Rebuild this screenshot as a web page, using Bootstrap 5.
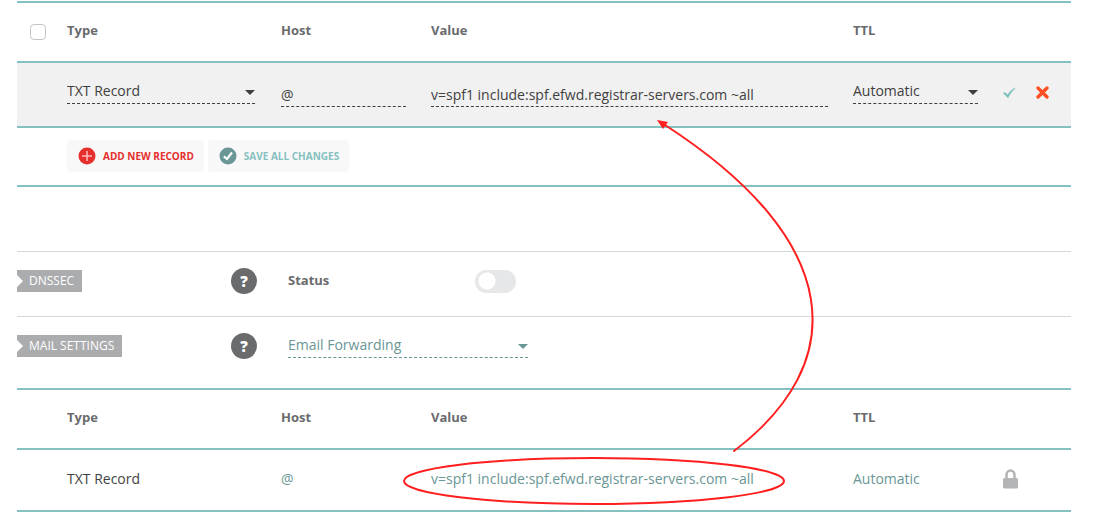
<!DOCTYPE html>
<html lang="en">
<head>
<meta charset="utf-8">
<meta name="viewport" content="width=device-width, initial-scale=1">
<title>Advanced DNS</title>
<link href="https://cdn.jsdelivr.net/npm/bootstrap@5.3.0/dist/css/bootstrap.min.css" rel="stylesheet">
<style>
  :root { --teal: #85c1c1; --teal-dark: #6a9696; --ink: #3f3f3f; --head: #6a6b6d; }
  body { font-family: "Open Sans", "Noto Sans", sans-serif; font-size: 14px; line-height: 20px; color: var(--ink); background: #fff; }
  .dns-page { padding: 1px 32px 4px 17px; }
  .records { table-layout: fixed; border-collapse: separate; border-spacing: 0; border-bottom: 2px solid var(--teal); }
  .records th, .records td { border-top: 2px solid var(--teal); padding: 0 25px 0 0; vertical-align: top; }
  .records th { height: 60px; padding-top: 17px; color: var(--head); font-weight: 700; font-size: 13px; }
  .col-check { width: 50px; } .col-type { width: 214px; } .col-host, .col-ttl { width: 150px; } .col-act { width: 68px; }
  .records td { height: 62px; padding-top: 19px; }
  .records .editing td { height: 65px; padding-top: 16px; background: #f1f1f1; }
  .records .cell-type-edit { padding-right: 26px; }
  .records td.cell-act { padding-right: 0; }
  .form-check-input.pick { width: 16px; height: 16px; margin: 4px 0 0 13px; border: 1px solid #c4c4c4; border-radius: 4px; display: block; }
  .line-field { display: block; width: 100%; border: 0; border-bottom: 1px dashed currentColor; border-radius: 0; background: transparent; color: inherit; padding: 0; height: 25px; font: inherit; line-height: 20px; outline-offset: 2px; }
  select.line-field { appearance: none; }
  input.line-field { margin-top: 3px; }
  .pick-wrap { position: relative; }
  .pick-wrap svg { position: absolute; right: 0; top: 11px; pointer-events: none; }
  .icon-btn { border: 0; background: none; padding: 0; line-height: 0; }
  .row-actions { gap: 20px; padding-top: 7px; }
  .action-bar { padding: 12px 0 13px 50px; border-bottom: 2px solid var(--teal); gap: 4px; }
  .action-bar .btn { --bs-btn-padding-x: 10px; --bs-btn-padding-y: 0; height: 32px; font-size: 10px; font-weight: 700; line-height: 32px; background: #f8f8f8; border: 0; border-radius: 4px; gap: 7px; padding-left: 11px; }
  .action-bar .btn-add { color: #e62f2d; } .action-bar .btn-save { color: var(--teal); }
  .settings { margin-top: 64px; }
  .setting { border-top: 1px solid #d6d7d7; height: 65px; padding-top: 16px; }
  .setting:last-child { height: 72px; }
  .tag-cell { width: 214px; padding-top: 2px; }
  .tag { display: inline-block; background: #abacae; color: #fff; font-size: 12px; line-height: 22px; padding: 0 8px 0 12px; clip-path: polygon(0 0, 100% 0, 100% 100%, 0 100%, 0 17px, 6px 11px, 0 5px); }
  .help { width: 26px; height: 26px; border: 0; border-radius: 50%; background: #6a6b6d; color: #fff; font: 800 15px/26px "Open Sans", sans-serif; padding: 0; }
  .setting-body { margin-left: 31px; }
  .status-label { width: 187px; color: var(--head); font-weight: 700; font-size: 13px; padding-top: 2px; }
  .form-check-input.toggle { width: 41px; height: 23px; margin: 2px 0 0; border: 0; background: #e6e7e8 radial-gradient(circle at 12px 11px, #fff 8px, transparent 9px) no-repeat; border-radius: 12px; }
  .forwarding { width: 240px; color: var(--teal-dark); }
  .teal-text { color: var(--teal-dark); }
  .lock-icon { display: block; }
  .marks { position: absolute; left: 0; top: 0; pointer-events: none; }
</style>
</head>
<body>
<main class="dns-page position-relative">
  <table class="records w-100">
    <colgroup><col class="col-check"><col class="col-type"><col class="col-host"><col><col class="col-ttl"><col class="col-act"></colgroup>
    <thead>
      <tr>
        <th><input class="form-check-input pick" type="checkbox" aria-label="Select all records"></th>
        <th scope="col">Type</th><th scope="col">Host</th><th scope="col">Value</th><th scope="col">TTL</th><th></th>
      </tr>
    </thead>
    <tbody>
      <tr class="editing">
        <td></td>
        <td class="cell-type-edit"><div class="pick-wrap"><select class="line-field" aria-label="Record type"><option>TXT Record</option></select><svg width="10" height="5"><path d="M0 0h10L5 5z" fill="#3f3f3f"/></svg></div></td>
        <td><input class="line-field" type="text" value="@" aria-label="Host"></td>
        <td><input class="line-field" type="text" value="v=spf1 include:spf.efwd.registrar-servers.com ~all" aria-label="Value"></td>
        <td><div class="pick-wrap"><select class="line-field" aria-label="TTL"><option>Automatic</option></select><svg width="10" height="5"><path d="M0 0h10L5 5z" fill="#3f3f3f"/></svg></div></td>
        <td class="cell-act">
          <div class="d-flex row-actions">
            <button class="icon-btn" type="button" aria-label="Save record"><svg width="13" height="12"><path d="M0 6.300C.8 5.300 1.700 5 2.300 5.400L4.600 7.400C7 4.300 9.500 1.800 12 .6L12.300 1.300C9.500 4 7 7.500 5.100 11.300z" fill="#85c1c1"/></svg></button>
            <button class="icon-btn" type="button" aria-label="Discard record"><svg width="13" height="13"><path d="M2 2 11 11M11 2 2 11" stroke="#ff4f22" stroke-width="3.300" stroke-linecap="round"/></svg></button>
          </div>
        </td>
      </tr>
    </tbody>
  </table>

  <div class="action-bar d-flex">
    <button class="btn btn-add d-flex align-items-center" type="button"><svg width="18" height="18"><circle cx="9" cy="9" r="8.500" fill="#e62f2d"/><path d="M9 4v10M4 9h10" stroke="#f9bcbc" stroke-width="1.500"/></svg>ADD NEW RECORD</button>
    <button class="btn btn-save d-flex align-items-center" type="button"><svg width="18" height="18"><circle cx="9" cy="9" r="8.500" fill="#6a9696"/><path d="M4.800 9.300 8 12l5-6.500" fill="none" stroke="#fff" stroke-width="2.200"/></svg>SAVE ALL CHANGES</button>
  </div>

  <section class="settings">
    <div class="setting d-flex align-items-start">
      <div class="tag-cell"><span class="tag">DNSSEC</span></div>
      <button class="help" type="button" aria-label="Help on DNSSEC">?</button>
      <div class="setting-body d-flex">
        <label class="status-label" for="dnssec">Status</label>
        <input class="form-check-input toggle" type="checkbox" role="switch" id="dnssec">
      </div>
    </div>
    <div class="setting d-flex align-items-start">
      <div class="tag-cell"><span class="tag">MAIL SETTINGS</span></div>
      <button class="help" type="button" aria-label="Help on mail settings">?</button>
      <div class="setting-body forwarding pick-wrap"><select class="line-field" aria-label="Mail settings"><option>Email Forwarding</option></select><svg width="10" height="5"><path d="M0 0h10L5 5z" fill="#6a9696"/></svg></div>
    </div>
  </section>

  <table class="records w-100">
    <colgroup><col class="col-check"><col class="col-type"><col class="col-host"><col><col class="col-ttl"><col class="col-act"></colgroup>
    <thead>
      <tr><th></th><th scope="col">Type</th><th scope="col">Host</th><th scope="col">Value</th><th scope="col">TTL</th><th></th></tr>
    </thead>
    <tbody>
      <tr>
        <td></td><td>TXT Record</td><td class="teal-text">@</td><td class="teal-text text-nowrap">v=spf1 include:spf.efwd.registrar-servers.com ~all</td><td class="teal-text">Automatic</td>
        <td class="cell-act"><svg class="lock-icon" width="15" height="20" viewBox="1 0 15 20" role="img" aria-label="Locked"><path d="M4.500 9V6a4 4.500 0 0 1 8 0v3" fill="none" stroke="#b3b4b5" stroke-width="2.500"/><rect x="1" y="9" width="15" height="10.500" rx="1.500" fill="#b3b4b5"/></svg></td>
      </tr>
    </tbody>
  </table>

  <svg class="marks" width="830" height="512" aria-hidden="true">
    <g fill="none" stroke="#ff1f1f" stroke-width="2">
      <ellipse cx="594" cy="481" rx="190" ry="23"/>
      <path d="M734 451C850 363 846 242 665 125" stroke-linecap="round"/>
    </g>
    <path d="M657 120l11 2-5 7z" fill="#ff1f1f"/>
  </svg>
</main>
<script src="https://cdn.jsdelivr.net/npm/bootstrap@5.3.0/dist/js/bootstrap.bundle.min.js"></script>
</body>
</html>
